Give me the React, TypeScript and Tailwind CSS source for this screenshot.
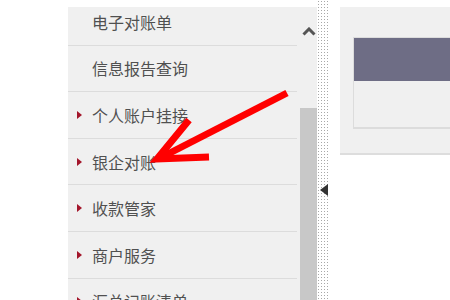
import React from "react";

const items: { label: string; arrow: boolean }[] = [
  { label: "电子对账单", arrow: false },
  { label: "信息报告查询", arrow: false },
  { label: "个人账户挂接", arrow: true },
  { label: "银企对账", arrow: true },
  { label: "收款管家", arrow: true },
  { label: "商户服务", arrow: true },
  { label: "汇总记账清单", arrow: true },
];

export default function App() {
  return (
    <div
      className="relative w-[450px] h-[300px] overflow-hidden bg-white"
      style={{ fontFamily: '"Noto Sans CJK SC", "Noto Sans", sans-serif' }}
    >
      <div className="flex h-full pt-[7px]">
        <div className="w-[68px] shrink-0" />
        {/* sidebar */}
        <div className="w-[232px] shrink-0 bg-[#f0f0f0] overflow-hidden">
          <div className="-mt-[8px] pr-[3px]">
            {items.map((it) => (
              <div
                key={it.label}
                className="h-[46.6px] border-b border-[#dcdcdc] flex items-center pl-[9px]"
              >
                <span className="w-[15px] shrink-0 flex items-center">
                  {it.arrow && (
                    <span className="block w-0 h-0 border-y-[4px] border-y-transparent border-l-[5px] border-l-[#a3162b]" />
                  )}
                </span>
                <span className="text-[16px] leading-none text-[#505050]">{it.label}</span>
              </div>
            ))}
          </div>
        </div>
        {/* scrollbar */}
        <div className="w-[17px] shrink-0 bg-[#f0f0f0] flex flex-col">
          <div className="h-[101px] flex justify-center pt-[20px]">
            <svg width="14" height="9" viewBox="0 0 14 9">
              <polyline points="1.5,7.5 7,2 12.5,7.5" fill="none" stroke="#555" strokeWidth="3" />
            </svg>
          </div>
          <div className="flex-1 bg-[#c8c8c8]" />
        </div>
        {/* dotted strip */}
        <div className="w-[13px] shrink-0 -mt-[7px] bg-white bg-[radial-gradient(circle,#a8a8a8_0.7px,transparent_1px)] bg-[size:3px_3px] flex flex-col">
          <div className="h-[184px]" />
          <div className="pl-[3px]">
            <span className="block w-0 h-0 border-y-[6px] border-y-transparent border-r-[8px] border-r-[#333]" />
          </div>
        </div>
        <div className="w-[10px] shrink-0" />
        {/* right panel */}
        <div className="flex-1">
          <div className="h-[148px] bg-[#f0f0f0] border-b-[2px] border-[#dddddd] pl-[13px] pt-[30px]">
            <div className="border border-[#dcdcdc] border-r-0 border-b-[2px]">
              <div className="h-[43px] bg-[#6e6d85]" />
              <div className="h-[46px] bg-[#f0f0f0]" />
            </div>
          </div>
        </div>
      </div>
      {/* annotation arrow */}
      <svg className="absolute left-0 top-0" width="450" height="300" viewBox="0 0 450 300">
        <line x1="287" y1="93" x2="162" y2="157" stroke="#ff0000" strokeWidth="7" />
        <polyline
          points="189,120 157,159 209,157"
          fill="none"
          stroke="#ff0000"
          strokeWidth="7"
          strokeLinejoin="miter"
        />
      </svg>
    </div>
  );
}
